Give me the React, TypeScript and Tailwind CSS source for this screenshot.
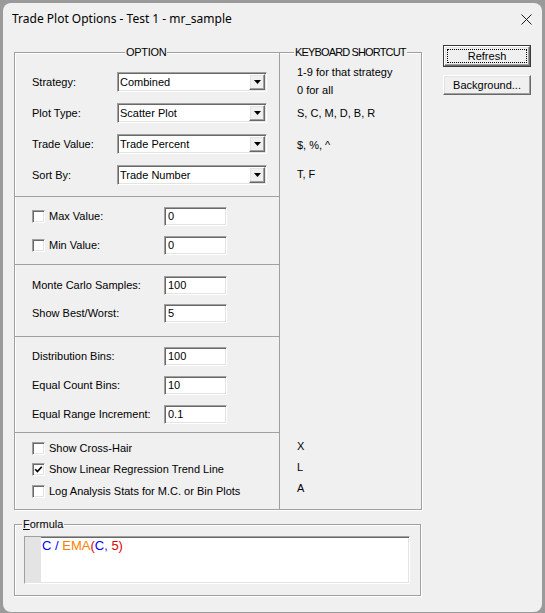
import React from "react";

const sunken =
  "border border-t-[#a0a0a0] border-l-[#a0a0a0] border-b-white border-r-white shadow-[inset_1px_1px_0_#696969,inset_-1px_-1px_0_#e3e3e3]";
const raised =
  "border border-t-white border-l-white border-b-[#696969] border-r-[#696969] shadow-[inset_-1px_-1px_0_#a0a0a0,inset_1px_1px_0_#e3e3e3]";

function Combo({ value }: { value: string }) {
  return (
    <div className={`w-[150px] h-[20px] bg-white p-px flex ${sunken}`}>
      <div className="flex-1 pl-[1px] flex items-center leading-[13px] text-black">{value}</div>
      <div className={`w-[16px] h-[16px] bg-[#f0f0f0] flex items-center justify-center ${raised}`}>
        <svg width="7" height="4" viewBox="0 0 7 4">
          <path d="M0 0 H7 L3.5 4 Z" fill="#000" />
        </svg>
      </div>
    </div>
  );
}

function Input({ value }: { value: string }) {
  return (
    <div className={`w-[63px] h-[19px] bg-white pl-[3px] flex items-center leading-[13px] ${sunken}`}>
      {value}
    </div>
  );
}

function Check({ checked }: { checked?: boolean }) {
  return (
    <div className={`w-[13px] h-[13px] bg-white shrink-0 flex items-center justify-center ${sunken}`}>
      {checked && (
        <svg width="9" height="9" viewBox="0 0 9 9">
          <polyline points="1.2,4.2 3.4,6.6 7.8,1.8" fill="none" stroke="#000" strokeWidth="1.7" />
        </svg>
      )}
    </div>
  );
}

function ComboRow({ label, value }: { label: string; value: string }) {
  return (
    <div className="h-[20px] flex items-center pl-[17px]">
      <div className="w-[85px]">{label}</div>
      <Combo value={value} />
    </div>
  );
}

function InputRow({ label, value, check }: { label: string; value: string; check?: boolean }) {
  return (
    <div className="h-[19px] flex items-center pl-[17px]">
      <div className="w-[132px] flex items-center">
        {check && <Check />}
        <span className={check ? "ml-[4px]" : ""}>{label}</span>
      </div>
      <Input value={value} />
    </div>
  );
}

function CheckRow({ label, checked, cls }: { label: string; checked?: boolean; cls?: string }) {
  return (
    <div className={`h-[16px] flex items-center pl-[17px] ${cls ?? ""}`}>
      <Check checked={checked} />
      <span className="ml-[4px]">{label}</span>
    </div>
  );
}

export default function App() {
  return (
    <div className="w-[545px] h-[613px] bg-[#9a9a9a] pt-[3px] pl-[3px] font-['Liberation_Sans',Arial,sans-serif] text-[11px] leading-[13px] text-black">
      <div className="w-[539px] h-[609px] bg-[#f0f0f0] rounded-[8px] flex flex-col overflow-hidden">
        {/* Title bar */}
        <div className="h-[32px] shrink-0 flex items-center justify-between pl-[9px] pr-[10px]">
          <span className="font-['Noto_Sans',sans-serif] text-[12px] leading-[16px] text-black">
            Trade Plot Options - Test 1 - mr_sample
          </span>
          <svg width="11" height="11" viewBox="0 0 11 11">
            <path d="M0.5 0.5 L10.5 10.5 M10.5 0.5 L0.5 10.5" stroke="#1a1a1a" strokeWidth="1" />
          </svg>
        </div>

        {/* Body */}
        <div className="flex pl-[11px]">
          <div className="flex flex-col pt-[17px]">
            {/* Main group box */}
            <div className="relative w-[408px] h-[458px] border border-[#a0a0a0] shadow-[inset_1px_1px_0_#fff,1px_1px_0_#fff] flex">
              <div className="absolute top-[-7px] left-[110px] bg-[#f0f0f0] px-[1px] tracking-[-0.3px]">OPTION</div>
              <div className="absolute top-[-7px] left-[279px] bg-[#f0f0f0] px-[1px] tracking-[-0.85px]">KEYBOARD SHORTCUT</div>

              {/* Left column */}
              <div className="w-[265px] h-full border-r border-[#a0a0a0] flex flex-col">
                <div className="h-[144px] border-b border-[#a0a0a0] pt-[19px] flex flex-col gap-[11px]">
                  <ComboRow label="Strategy:" value="Combined" />
                  <ComboRow label="Plot Type:" value="Scatter Plot" />
                  <ComboRow label="Trade Value:" value="Trade Percent" />
                  <ComboRow label="Sort By:" value="Trade Number" />
                </div>
                <div className="h-[68px] border-b border-[#a0a0a0] pt-[10px] flex flex-col gap-[10px]">
                  <InputRow label="Max Value:" value="0" check />
                  <InputRow label="Min Value:" value="0" check />
                </div>
                <div className="h-[72px] border-b border-[#a0a0a0] pt-[11px] flex flex-col gap-[9px]">
                  <InputRow label="Monte Carlo Samples:" value="100" />
                  <InputRow label="Show Best/Worst:" value="5" />
                </div>
                <div className="h-[96px] border-b border-[#a0a0a0] pt-[10px] flex flex-col gap-[10px]">
                  <InputRow label="Distribution Bins:" value="100" />
                  <InputRow label="Equal Count Bins:" value="10" />
                  <InputRow label="Equal Range Increment:" value="0.1" />
                </div>
                <div className="flex-1 pt-[7px] flex flex-col">
                  <CheckRow label="Show Cross-Hair" />
                  <CheckRow label="Show Linear Regression Trend Line" checked cls="mt-[5px]" />
                  <CheckRow label="Log Analysis Stats for M.C. or Bin Plots" cls="mt-[6px]" />
                </div>
              </div>

              {/* Right column */}
              <div className="flex-1 pl-[17px] pt-[13px] flex flex-col">
                <div>1-9 for that strategy</div>
                <div className="mt-[5px]">0 for all</div>
                <div className="mt-[10px]">S, C, M, D, B, R</div>
                <div className="mt-[19px]">$, %, ^</div>
                <div className="mt-[16px]">T, F</div>
                <div className="mt-[259px]">X</div>
                <div className="mt-[8px]">L</div>
                <div className="mt-[8px]">A</div>
              </div>
            </div>

            {/* Formula group */}
            <div className="relative mt-[14px] w-[407px] h-[72px] border border-[#a0a0a0] shadow-[inset_1px_1px_0_#fff,1px_1px_0_#fff] pt-[11px] pl-[9px]">
              <div className="absolute top-[-7px] left-[7px] bg-[#f0f0f0] px-[1px]">
                <span className="underline">F</span>ormula
              </div>
              <div className={`w-[386px] h-[48px] bg-white flex ${sunken}`}>
                <div className="w-[16px] h-full bg-[#e4e4e4] shrink-0" />
                <div className="pl-[1px] pt-[1px] text-[13px] leading-[15px] whitespace-pre">
                  <span className="text-[#0000ff]">C / </span>
                  <span className="text-[#ff8000]">EMA</span>
                  <span className="text-[#e00000]">(</span>
                  <span className="text-[#0000ff]">C</span>
                  <span className="text-[#3030c0]">, </span>
                  <span className="text-[#e00000]">5)</span>
                </div>
              </div>
            </div>
          </div>

          {/* Buttons */}
          <div className="ml-[21px] pt-[10px] flex flex-col">
            <div className="w-[88px] h-[22px] border border-[#3a3a3a]">
              <div className={`w-full h-full bg-[#f0f0f0] p-[2px] ${raised}`}>
                <div className="w-full h-full border border-dotted border-black flex items-center justify-center">
                  Refresh
                </div>
              </div>
            </div>
            <div className={`mt-[8px] w-[88px] h-[20px] bg-[#f0f0f0] flex items-center justify-center ${raised}`}>
              Background...
            </div>
          </div>
        </div>
      </div>
    </div>
  );
}
